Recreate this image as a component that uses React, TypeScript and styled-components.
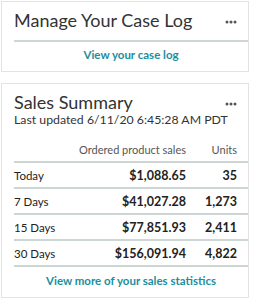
import React from "react";
import styled, { createGlobalStyle } from "styled-components";

const rows = [
  { label: "Today", sales: "$1,088.65", units: "35" },
  { label: "7 Days", sales: "$41,027.28", units: "1,273" },
  { label: "15 Days", sales: "$77,851.93", units: "2,411" },
  { label: "30 Days", sales: "$156,091.94", units: "4,822" },
];

const Dots = () => (
  <svg width="12" height="4" viewBox="0 0 12 4">
    <circle cx="2" cy="2" r="1.5" fill="#555" />
    <circle cx="6" cy="2" r="1.5" fill="#555" />
    <circle cx="10" cy="2" r="1.5" fill="#555" />
  </svg>
);

const App = () => (
  <>
    <GlobalStyle />
    <Page>
      <Card>
        <Header>
          <Title>Manage Your Case Log</Title>
          <More>
            <Dots />
          </More>
        </Header>
        <Rule />
        <Link href="#">View your case log</Link>
      </Card>

      <Card>
        <Header>
          <Title>Sales Summary</Title>
          <More>
            <Dots />
          </More>
        </Header>
        <Updated>Last updated 6/11/20 6:45:28 AM PDT</Updated>
        <Table>
          <HeadRow>
            <span />
            <HeadCell>Ordered product sales</HeadCell>
            <HeadCell>Units</HeadCell>
          </HeadRow>
          {rows.map((row) => (
            <Row key={row.label}>
              <Label>{row.label}</Label>
              <Value>{row.sales}</Value>
              <Value>{row.units}</Value>
            </Row>
          ))}
        </Table>
        <Link href="#">View more of your sales statistics</Link>
      </Card>
    </Page>
  </>
);

export default App;

const GlobalStyle = createGlobalStyle`
  body {
    margin: 0;
    background: #fff;
    font-family: Lato, "Liberation Sans", sans-serif;
    color: #333;
  }
`;

const Page = styled.div`
  display: flex;
  flex-direction: column;
  gap: 11px;
  width: 248px;
  padding: 1px 0 0 1px;
`;

const Card = styled.div`
  display: flex;
  flex-direction: column;
  border: 1px solid #e3e3e3;
  padding: 8px 0 8px 12px;
  background: #fff;
`;

const Header = styled.div`
  display: flex;
  align-items: center;
  justify-content: space-between;
  padding-right: 11px;
  height: 20px;
`;

const Title = styled.div`
  font-size: 18px;
  color: #333;
`;

const More = styled.div`
  display: flex;
  align-items: center;
  margin-top: 4px;
`;

const Rule = styled.div`
  height: 2px;
  background: #ccd6d4;
  margin-top: 10px;
`;

const Link = styled.a`
  display: block;
  margin-top: 5px;
  line-height: 16px;
  font-size: 11.5px;
  font-weight: 700;
  color: #1a8fa0;
  text-align: center;
  text-decoration: none;
`;

const Updated = styled.div`
  font-size: 12.3px;
  line-height: 16px;
  color: #333;
`;

const Table = styled.div`
  display: flex;
  flex-direction: column;
  margin-top: 9px;
  & + ${Link} {
    margin-top: 6px;
  }
`;

const Row = styled.div`
  display: grid;
  grid-template-columns: 1fr auto 51px;
  align-items: center;
  height: 24px;
  padding-right: 11px;
  border-bottom: 2px solid #ccd6d4;
  font-size: 11px;
`;

const HeadRow = styled(Row)`
  color: #555;
`;

const HeadCell = styled.span`
  text-align: right;
`;

const Label = styled.span`
  font-size: 11.5px;
  color: #222;
`;

const Value = styled.span`
  text-align: right;
  font-size: 12.5px;
  font-weight: 700;
  color: #222;
`;
